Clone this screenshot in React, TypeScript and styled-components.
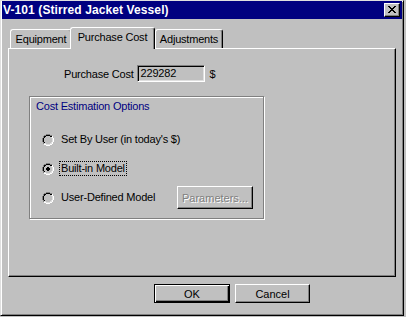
import React from "react";
import styled, { createGlobalStyle } from "styled-components";

const GlobalStyle = createGlobalStyle`
  html, body {
    margin: 0;
    padding: 0;
    background: #c0c0c0;
  }
  body {
    font-family: "Liberation Sans", Arial, sans-serif;
    font-size: 11px;
    letter-spacing: -0.2px;
    color: #000;
  }
`;

const Window = styled.div`
  box-sizing: border-box;
  width: 404px;
  height: 316px;
  background: #c0c0c0;
  border: 1px solid;
  border-color: #dfdfdf #000 #000 #dfdfdf;
  box-shadow: inset 1px 1px #fff, inset -1px -1px #808080;
  padding: 0 1px 1px 1px;
  display: flex;
  flex-direction: column;
`;

const TitleBar = styled.div`
  height: 18px;
  flex: none;
  background: #000080;
  color: #fff;
  display: flex;
  align-items: center;
  padding-left: 1px;
  font-weight: bold;
  font-size: 12px;
  letter-spacing: 0.1px;
`;

const CloseButton = styled.div`
  box-sizing: border-box;
  width: 16px;
  height: 14px;
  margin-left: auto;
  margin-right: 2px;
  background: #c0c0c0;
  border: 1px solid;
  border-color: #fff #000 #000 #fff;
  box-shadow: inset -1px -1px #808080;
  display: flex;
  align-items: center;
  justify-content: center;
  padding: 0 1px 1px 0;
`;

const Body = styled.div`
  flex: 1;
  padding: 8px 6px 0 6px;
  display: flex;
  flex-direction: column;
`;

const TabStrip = styled.div`
  display: flex;
  align-items: flex-end;
  height: 21px;
  padding-left: 2px;
`;

const Tab = styled.div<{ $active?: boolean; $w: number }>`
  box-sizing: border-box;
  width: ${(p) => p.$w}px;
  height: ${(p) => (p.$active ? 22 : 19)}px;
  margin-left: ${(p) => (p.$active ? -2 : 0)}px;
  margin-bottom: ${(p) => (p.$active ? -1 : 0)}px;
  position: relative;
  z-index: ${(p) => (p.$active ? 1 : 0)};
  background: #c0c0c0;
  border-top: 1px solid #fff;
  border-left: 1px solid #fff;
  border-right: 1px solid #000;
  border-radius: 3px 3px 0 0;
  box-shadow: inset -1px 0 #808080;
  padding-top: 3px;
  line-height: 13px;
  text-align: center;
`;

const Panel = styled.div`
  box-sizing: border-box;
  height: 229px;
  border: 1px solid;
  border-color: #fff #000 #000 #fff;
  box-shadow: inset -1px -1px #808080;
  padding-top: 16px;
  display: flex;
  flex-direction: column;
  align-items: flex-start;
`;

const CostRow = styled.div`
  display: flex;
  align-items: center;
  height: 17px;
  padding-left: 55px;
`;

const ValueBox = styled.div`
  box-sizing: border-box;
  width: 68px;
  height: 17px;
  margin-left: 3px;
  border: 1px solid;
  border-color: #808080 #fff #fff #808080;
  box-shadow: inset 1px 1px #000, inset -1px -1px #dfdfdf;
  padding-left: 3px;
  line-height: 15px;
`;

const Unit = styled.span`
  margin-left: 5px;
`;

const GroupBox = styled.div`
  box-sizing: border-box;
  width: 235px;
  height: 123px;
  margin: 14px 0 0 20px;
  border: 1px solid #808080;
  box-shadow: inset 1px 1px #fff, 1px 1px 0 #fff;
  padding: 3px 0 0 6px;
  display: flex;
  flex-direction: column;
`;

const GroupCaption = styled.div`
  color: #000080;
  line-height: 13px;
`;

const OptionList = styled.div`
  display: flex;
  flex-direction: column;
  gap: 6px;
  margin-top: 15px;
  margin-left: 6px;
`;

const OptionRow = styled.div`
  display: flex;
  align-items: center;
  height: 23px;
`;

const RadioMark = styled.svg`
  flex: none;
  margin-right: 5px;
`;

const OptionLabel = styled.span<{ $focused?: boolean }>`
  padding: 0 1px;
  line-height: 13px;
  border: 1px dotted ${(p) => (p.$focused ? "#000" : "transparent")};
`;

const Button = styled.button<{ $default?: boolean; $disabled?: boolean }>`
  box-sizing: border-box;
  width: ${(p) => (p.$default ? 76 : 75)}px;
  height: 19px;
  padding: 0;
  background: #c0c0c0;
  font: inherit;
  color: ${(p) => (p.$disabled ? "#808080" : "#000")};
  text-shadow: ${(p) => (p.$disabled ? "1px 1px 0 #fff" : "none")};
  border: 1px solid;
  border-color: ${(p) => (p.$default ? "#000" : "#fff #000 #000 #fff")};
  box-shadow: ${(p) =>
    p.$default
      ? "inset 1px 1px #fff, inset -1px -1px #000, inset -2px -2px #808080"
      : "inset -1px -1px #808080"};
  cursor: default;
`;

const ParamButton = styled(Button)`
  width: 76px;
  height: 23px;
  margin-left: auto;
  margin-right: 10px;
`;

const ButtonRow = styled.div`
  display: flex;
  gap: 5px;
  padding-left: 146px;
  margin-top: 7px;
`;

const CloseGlyph = () => (
  <svg width="8" height="7" viewBox="0 0 8 7" shapeRendering="crispEdges">
    <path
      d="M0 0h2v1h-2z M6 0h2v1h-2z M1 1h2v1h-2z M5 1h2v1h-2z M2 2h4v1h-4z M3 3h2v1h-2z M2 4h4v1h-4z M1 5h2v1h-2z M5 5h2v1h-2z M0 6h2v1h-2z M6 6h2v1h-2z"
      fill="#000"
    />
  </svg>
);

// 12x12 radio bitmap: G grey, K black, L light, W white, F face, D dot
const radioRows = [
  "....GGGG....",
  "..GGKKKKGG..",
  ".GKKFFFFKKW.",
  ".GKFFFFFFLW.",
  "GKFFFDDFFFLW",
  "GKFFDDDDFFLW",
  "GKFFDDDDFFLW",
  "GKFFFDDFFFLW",
  ".GKFFFFFFLW.",
  ".GLLFFFFLLW.",
  "..WWLLLLWW..",
  "....WWWW....",
];

const radioColors: Record<string, string> = {
  G: "#808080",
  K: "#000",
  L: "#dfdfdf",
  W: "#fff",
  F: "#c0c0c0",
};

const Radio = ({ checked }: { checked?: boolean }) => (
  <RadioMark width="12" height="12" viewBox="0 0 12 12" shapeRendering="crispEdges">
    {radioRows.map((row, y) =>
      row.split("").map((c, x) => {
        if (c === ".") return null;
        const fill = c === "D" ? (checked ? "#000" : radioColors.F) : radioColors[c];
        return <rect key={`${x}-${y}`} x={x} y={y} width="1" height="1" fill={fill} />;
      })
    )}
  </RadioMark>
);

export default function App() {
  return (
    <>
      <GlobalStyle />
      <Window>
        <TitleBar>
          V-101 (Stirred Jacket Vessel)
          <CloseButton>
            <CloseGlyph />
          </CloseButton>
        </TitleBar>
        <Body>
          <TabStrip>
            <Tab $w={62}>Equipment</Tab>
            <Tab $w={85} $active>
              Purchase Cost
            </Tab>
            <Tab $w={68}>Adjustments</Tab>
          </TabStrip>
          <Panel>
            <CostRow>
              Purchase Cost
              <ValueBox>229282</ValueBox>
              <Unit>$</Unit>
            </CostRow>
            <GroupBox>
              <GroupCaption>Cost Estimation Options</GroupCaption>
              <OptionList>
                <OptionRow>
                  <Radio />
                  <OptionLabel>Set By User (in today's $)</OptionLabel>
                </OptionRow>
                <OptionRow>
                  <Radio checked />
                  <OptionLabel $focused>Built-in Model</OptionLabel>
                </OptionRow>
                <OptionRow>
                  <Radio />
                  <OptionLabel>User-Defined Model</OptionLabel>
                  <ParamButton $disabled>Parameters...</ParamButton>
                </OptionRow>
              </OptionList>
            </GroupBox>
          </Panel>
          <ButtonRow>
            <Button $default>OK</Button>
            <Button>Cancel</Button>
          </ButtonRow>
        </Body>
      </Window>
    </>
  );
}
